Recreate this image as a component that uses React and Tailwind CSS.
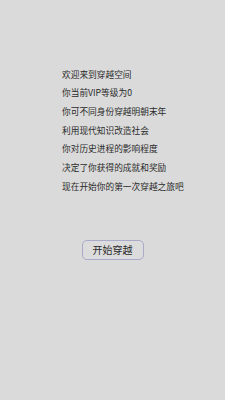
const lines = [
  '欢迎来到穿越空间',
  '你当前VIP等级为0',
  '你可不同身份穿越明朝末年',
  '利用现代知识改造社会',
  '你对历史进程的影响程度',
  '决定了你获得的成就和奖励',
  '现在开始你的第一次穿越之旅吧',
];

export default function App() {
  return (
    <div
      className="w-[225px] h-[400px] bg-[#dadada] text-[#2a2a2a] flex flex-col"
      style={{ fontFamily: '"Noto Sans CJK SC", "Liberation Sans", sans-serif' }}
    >
      <div className="pt-[65.5px] pl-[62px] flex flex-col">
        {lines.map((l) => (
          <div key={l} className="text-[8.7px] leading-[18.7px] h-[18.7px]">
            {l}
          </div>
        ))}
      </div>
      <div className="flex justify-center mt-[44px]">
        <button className="w-[62px] h-[20px] rounded-[5px] border border-[#a9a9c9] bg-[#dcdcdc] text-[10px] leading-none text-[#2a2a2a] flex items-center justify-center">
          开始穿越
        </button>
      </div>
    </div>
  );
}
